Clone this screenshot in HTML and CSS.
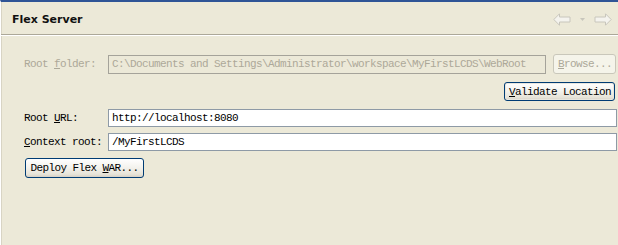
FILE: index.html
```html
<!DOCTYPE html>
<html>
<head>
<meta charset="utf-8">
<link rel="stylesheet" href="styles.css">
</head>
<body>
<div class="page">
  <div class="header">
    <div class="title">Flex Server</div>
    <div class="nav">
      <svg class="arrow" width="18" height="13" viewBox="0 0 18 13"><path d="M0.8 6.5 L6.5 0.8 V4 H17 V9 H6.5 V12.2 Z" fill="#F4F3EE" stroke="#C8C6BC" stroke-width="1"/></svg>
      <svg class="drop" width="5" height="3" viewBox="0 0 5 3"><path d="M0 0 H5 L2.5 3 Z" fill="#C8C6BC"/></svg>
      <svg class="arrow" width="18" height="13" viewBox="0 0 18 13"><path d="M17.2 6.5 L11.5 0.8 V4 H1 V9 H11.5 V12.2 Z" fill="#F4F3EE" stroke="#C8C6BC" stroke-width="1"/></svg>
    </div>
  </div>
  <div class="content">
    <div class="row">
      <label class="label disabled">Root <u>f</u>older:</label>
      <div class="field field-disabled">C:\Documents and Settings\Administrator\workspace\MyFirstLCDS\WebRoot</div>
      <button class="btn btn-disabled browse"><u>B</u>rowse...</button>
    </div>
    <div class="row row-right">
      <button class="btn btn-default"><u>V</u>alidate Location</button>
    </div>
    <div class="row row-url">
      <label class="label">Root <u>U</u>RL:</label>
      <div class="field field-wide">http://localhost:8080</div>
    </div>
    <div class="row row-ctx">
      <label class="label"><u>C</u>ontext root:</label>
      <div class="field field-wide">/MyFirstLCDS</div>
    </div>
    <div class="row row-deploy">
      <button class="btn deploy">Deploy Flex <u>W</u>AR...</button>
    </div>
  </div>
</div>
</body>
</html>
```
FILE: styles.css
```css
html, body {
  margin: 0;
  padding: 0;
}
body {
  width: 618px;
  height: 245px;
  background: #ECE9D8;
  overflow: hidden;
}
.page {
  height: 243px;
  border-top: 2px solid #2F5496;
  border-left: 1px solid #FFFFFF;
  box-shadow: inset 1px 0 0 #D8D4C4;
  font-family: "Liberation Mono", "DejaVu Sans Mono", monospace;
  font-size: 11px;
  letter-spacing: -0.6px;
  color: #000;
}
.header {
  height: 32px;
  display: flex;
  align-items: center;
  justify-content: space-between;
  padding: 0 6px 0 11px;
  border-bottom: 1px solid #ACA899;
  box-shadow: 0 1px 0 #FFFFFF;
}
.title {
  font-family: "DejaVu Sans", sans-serif;
  font-weight: bold;
  font-size: 11px;
  letter-spacing: 0;
  color: #111;
  margin-top: 2px;
}
.nav {
  display: flex;
  align-items: center;
  gap: 5px;
  margin-top: 3px;
}
.nav .drop {
  margin: 0 4px;
}
.content {
  padding: 19px 1px 0 23px;
}
.row {
  display: flex;
  align-items: center;
}
.label {
  width: 84px;
  flex: none;
  line-height: 12px;
}
.label.disabled {
  color: #ACA899;
}
.field {
  box-sizing: border-box;
  height: 19px;
  line-height: 17px;
  padding: 0 3px;
  border: 1px solid #8E9AA6;
  background: #FFFFFF;
  white-space: nowrap;
  overflow: hidden;
}
.field-disabled {
  width: 438px;
  background: #ECE9D8;
  border-color: #A5A39A;
  color: #ACA899;
}
.field-wide {
  flex: 1;
  height: 18px;
  line-height: 16px;
}
.btn {
  box-sizing: border-box;
  height: 20px;
  padding: 0 4px;
  font-family: "Liberation Mono", "DejaVu Sans Mono", monospace;
  font-size: 11px;
  letter-spacing: -0.6px;
  color: #000;
  border: 1px solid #003C74;
  border-radius: 3px;
  background: linear-gradient(#FFFFFF 0%, #F4F3EE 45%, #E6E3D8 85%, #D6D0C5 100%);
  white-space: nowrap;
}
.btn-disabled {
  border-color: #C9C7BA;
  background: #F5F4EA;
  color: #ACA899;
}
.browse {
  width: 63px;
  margin-left: 7px;
}
.row-right {
  justify-content: flex-end;
  margin-top: 8px;
  padding-right: 2px;
}
.btn-default {
  width: 111px;
  height: 19px;
  box-shadow: inset 0 0 0 1px #E8E6DE;
}
.row-url {
  margin-top: 8px;
}
.row-ctx {
  margin-top: 6px;
}
.row-deploy {
  margin-top: 7px;
  padding-left: 1px;
}
.deploy {
  width: 119px;
}
u {
  text-decoration: underline;
  text-underline-offset: 1px;
}
```
